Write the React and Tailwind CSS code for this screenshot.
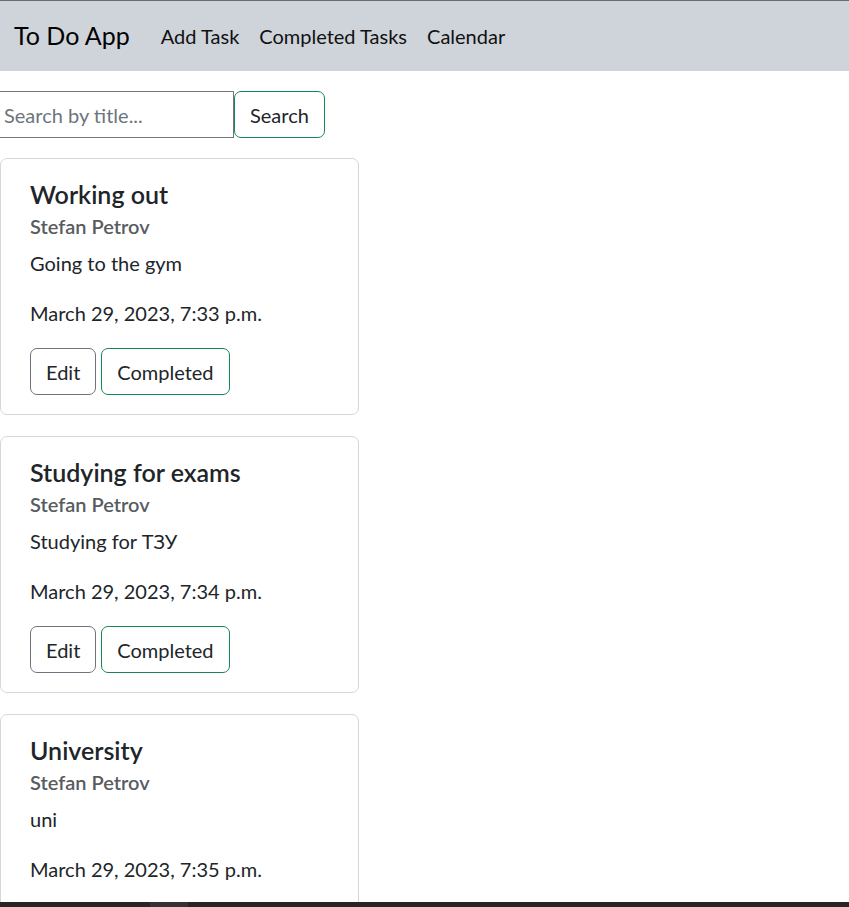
const tasks = [
  { id: 1, title: "Working out", author: "Stefan Petrov", text: "Going to the gym", date: "March 29, 2023, 7:33 p.m." },
  { id: 2, title: "Studying for exams", author: "Stefan Petrov", text: "Studying for ТЗУ", date: "March 29, 2023, 7:34 p.m." },
  { id: 3, title: "University", author: "Stefan Petrov", text: "uni", date: "March 29, 2023, 7:35 p.m." },
];

const font = { fontFamily: "Lato, 'Noto Sans', sans-serif" };

const TaskCard = ({ task }) => (
  <div className="w-[359px] rounded-[7px] border border-[#d5d7da] bg-white px-[29px] pt-[20px] pb-[19px]">
    <h5 className="text-[25px] leading-[30px] font-semibold text-[#212529]">{task.title}</h5>
    <h6 className="mt-[5px] text-[20px] leading-[24px] font-semibold text-[#595c5f]">{task.author}</h6>
    <p className="mt-[10px] text-[20px] leading-[30px] text-[#212529]">{task.text}</p>
    <p className="mt-[20px] text-[20px] leading-[30px] text-[#212529]">{task.date}</p>
    <div className="mt-[20px] flex gap-[5px]">
      <button className="h-[47px] rounded-[7px] border border-[#6c757d] px-[15px] text-[20px] text-[#212529]">Edit</button>
      <button className="h-[47px] rounded-[7px] border border-[#198754] px-[15px] text-[20px] text-[#212529]">Completed</button>
    </div>
  </div>
);

export default function App() {
  return (
    <div style={font} className="min-h-screen bg-white">
      <nav className="flex h-[71px] items-center border-t border-[#6b6b6b] bg-[#cfd4da] pl-[14px]">
        <span className="mr-[31px] text-[25px] text-[#000]">To Do App</span>
        <div className="flex gap-[20px] text-[20px] text-[#111]">
          <a>Add Task</a>
          <a>Completed Tasks</a>
          <a>Calendar</a>
        </div>
      </nav>

      <div className="mt-[20px] flex">
        <input
          placeholder="Search by title..."
          className="ml-[-1px] h-[47px] w-[235px] border border-[#767676] pl-[4px] text-[20px] text-[#212529] placeholder:text-[#6c757d] outline-none"
        />
        <button className="h-[47px] rounded-[7px] border border-[#198754] px-[15px] text-[20px] text-[#212529]">Search</button>
      </div>

      <div className="mt-[20px] flex flex-col gap-[21px] pb-[20px]">
        {tasks.map((t) => (
          <TaskCard key={t.id} task={t} />
        ))}
      </div>

      <div className="fixed bottom-0 left-0 flex h-[5px] w-full bg-[#262626]">
        <div className="ml-[150px] w-[38px] bg-[#333]" />
      </div>
    </div>
  );
}
